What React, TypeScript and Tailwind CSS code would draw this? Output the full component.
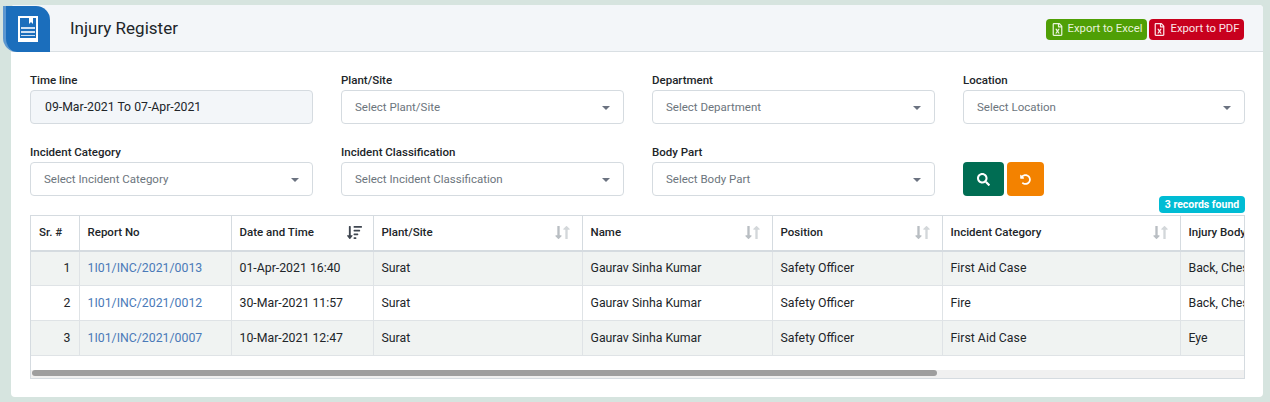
import React from "react";
import { FaSearch, FaUndoAlt, FaRegFileExcel, FaSortAmountDown, FaLongArrowAltDown, FaLongArrowAltUp } from "react-icons/fa";

const filters = [
  { label: "Plant/Site", placeholder: "Select Plant/Site" },
  { label: "Department", placeholder: "Select Department" },
  { label: "Location", placeholder: "Select Location" },
  { label: "Incident Category", placeholder: "Select Incident Category" },
  { label: "Incident Classification", placeholder: "Select Incident Classification" },
  { label: "Body Part", placeholder: "Select Body Part" },
];

const columns = [
  { title: "Sr. #", width: 48 },
  { title: "Report No", width: 152 },
  { title: "Date and Time", width: 142, sort: "active" },
  { title: "Plant/Site", width: 209, sort: "idle" },
  { title: "Name", width: 190, sort: "idle" },
  { title: "Position", width: 170, sort: "idle" },
  { title: "Incident Category", width: 238, sort: "idle" },
  { title: "Injury Body Part", width: 170 },
];

const rows = [
  ["1", "1I01/INC/2021/0013", "01-Apr-2021 16:40", "Surat", "Gaurav Sinha Kumar", "Safety Officer", "First Aid Case", "Back, Chest"],
  ["2", "1I01/INC/2021/0012", "30-Mar-2021 11:57", "Surat", "Gaurav Sinha Kumar", "Safety Officer", "Fire", "Back, Chest"],
  ["3", "1I01/INC/2021/0007", "10-Mar-2021 12:47", "Surat", "Gaurav Sinha Kumar", "Safety Officer", "First Aid Case", "Eye"],
];

const Caret = () => <span className="h-0 w-0 border-x-[4px] border-t-[4px] border-x-transparent border-t-[#6b7280]" />;

const SortIcon = ({ active }: { active?: boolean }) =>
  active ? (
    <FaSortAmountDown size={15} className="mr-[3px] text-[#3f4650]" />
  ) : (
    <span className="flex items-center">
      <FaLongArrowAltDown size={15} className="-mr-[7px] text-[#b9bec3]" />
      <FaLongArrowAltUp size={15} className="text-[#d3d7da]" />
    </span>
  );

const SelectBox = ({ label, placeholder }: { label: string; placeholder: string }) => (
  <div>
    <label className="mb-[1px] block text-[11.5px] font-medium leading-[18px] text-[#212529]">{label}</label>
    <div className="flex h-[34px] items-center justify-between rounded border border-[#d5dbe0] bg-white pl-[13px] pr-[13px] pt-[1px] text-[11.5px] text-[#6c757d]">
      {placeholder}
      <Caret />
    </div>
  </div>
);

export default function App() {
  return (
    <div className="h-[402px] w-[1270px] overflow-hidden bg-[#d6e4df] pl-[11px] pt-[5px] font-['Roboto',sans-serif]">
      <div className="h-[392px] w-[1252px] rounded bg-white">
        <div className="flex h-[47px] items-center justify-between rounded-t border-b border-[#d9dfe3] bg-[#f3f6f9] pr-[19px]">
          <div className="flex items-center">
            <div className="-ml-[8px] mt-[2px] flex h-[46px] w-[47px] items-center justify-center rounded-tr-[14px] rounded-bl-[14px] border-l-[3px] border-[#5c97d0] bg-[#1b6ebc]">
              <svg width="20" height="26" viewBox="0 0 20 26">
                <path d="M0 0h20v26H0z" fill="#fff" />
                <path d="M2 2h9v6l2-2 2 2V2h3v20H2z" fill="#1b6ebc" />
                <path d="M3 11h14v2H3zM3 15h14v2H3zM3 19h14v1H3z" fill="#cfe0f2" />
              </svg>
            </div>
            <h1 className="ml-[20px] text-[17px] font-normal leading-none text-[#212529]">Injury Register</h1>
          </div>
          <div className="mt-[2px] flex gap-[2px]">
            <button className="flex h-[21px] w-[101px] items-center justify-center gap-[4px] rounded-sm bg-[#4f9f06] text-[11.3px] text-[#e8f3dc]">
              <FaRegFileExcel size={13} />
              Export to Excel
            </button>
            <button className="flex h-[21px] w-[95px] items-center justify-center gap-[4px] rounded-sm bg-[#c8001e] text-[11.3px] text-[#fbe5e8]">
              <FaRegFileExcel size={13} />
              Export to PDF
            </button>
          </div>
        </div>

        <div className="pl-[19px] pr-[18px] pt-[19px]">
          <div className="grid grid-cols-[283px_283px_283px_282px] gap-x-[28px] gap-y-[19px]">
            <div>
              <label className="mb-[1px] block text-[11.5px] font-medium leading-[18px] text-[#212529]">Time line</label>
              <div className="flex h-[34px] items-center rounded border border-[#d5dbe0] bg-[#f3f6f9] pl-[14px] text-[12.25px] text-[#212529]">
                09-Mar-2021 To 07-Apr-2021
              </div>
            </div>
            {filters.map((f) => (
              <SelectBox key={f.label} {...f} />
            ))}
            <div className="flex items-end gap-[3px]">
              <button className="flex h-[34px] w-[41px] items-center justify-center rounded bg-[#006d53] text-white">
                <FaSearch size={13} />
              </button>
              <button className="flex h-[34px] w-[37px] items-center justify-center rounded bg-[#f38200] text-white">
                <FaUndoAlt size={11} />
              </button>
            </div>
          </div>

          <div className="flex justify-end">
            <span className="w-[86px] rounded-sm bg-[#00bcd4] text-center text-[10.5px] font-bold leading-[17px] text-white">3 records found</span>
          </div>

          <div className="mt-[2px] border-x border-b border-[#d5dbe0]">
            <div className="overflow-hidden">
              <table className="w-[1319px] table-fixed border-collapse text-[12.3px] text-[#212529]">
                <colgroup>
                  {columns.map((c) => (
                    <col key={c.title} style={{ width: c.width }} />
                  ))}
                </colgroup>
                <thead>
                  <tr className="h-[35px] border-y border-b-2 border-[#d5dbe0]">
                    {columns.map((c, i) => (
                      <th key={c.title} className={`border-[#d5dbe0] px-[8px] text-left text-[11.5px] font-medium ${i > 0 ? "border-l" : ""}`}>
                        <div className="flex items-center justify-between whitespace-nowrap">
                          {c.title}
                          {c.sort && <SortIcon active={c.sort === "active"} />}
                        </div>
                      </th>
                    ))}
                  </tr>
                </thead>
                <tbody>
                  {rows.map((row, r) => (
                    <tr key={row[0]} className={`h-[35px] border-b border-[#dfe3e6] ${r % 2 === 0 ? "bg-[#f0f3f2]" : "bg-white"}`}>
                      {row.map((cell, i) => (
                        <td
                          key={i}
                          className={`overflow-hidden whitespace-nowrap border-[#dfe3e6] px-[8px] ${i > 0 ? "border-l" : "text-right"} ${i === 1 ? "text-[#4a7ab8]" : ""}`}
                        >
                          {cell}
                        </td>
                      ))}
                    </tr>
                  ))}
                </tbody>
              </table>
            </div>
            <div className="mt-[14px] h-[8px] bg-[#f0f0f0]">
              <div className="ml-[1px] h-[6px] w-[905px] rounded-full bg-[#9e9e9e]" />
            </div>
          </div>
        </div>
      </div>
    </div>
  );
}
